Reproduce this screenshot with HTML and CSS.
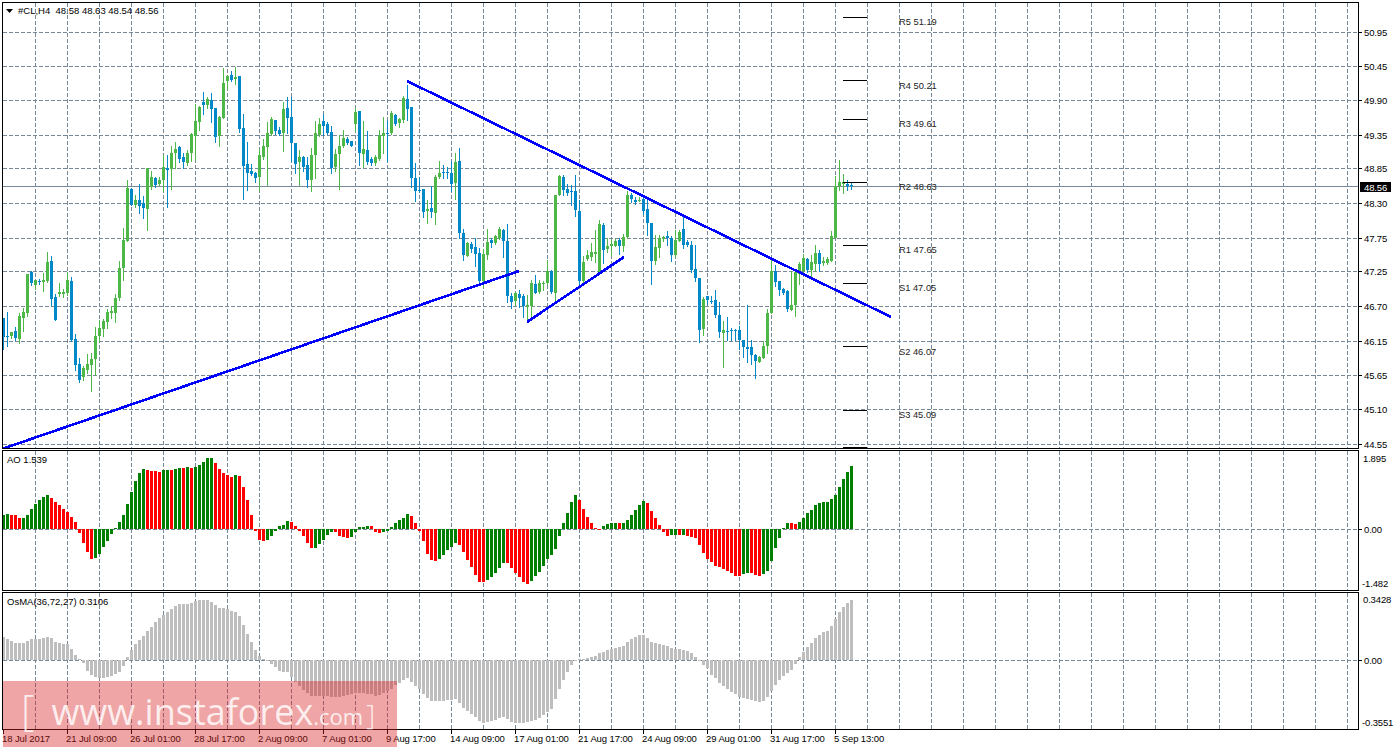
FILE: index.html
```html
<!DOCTYPE html>
<html lang="en">
<head>
<meta charset="utf-8">
<title>#CL,H4</title>
<link rel="stylesheet" href="styles.css">
</head>
<body>
<div class="terminal">
  <section class="pane pane-main">
    <div class="plot">
      <svg id="plot-main" class="canvas" width="1355" height="445" viewBox="3 3 1355 445" shape-rendering="crispEdges"></svg>
      <div class="legend legend-main">
        <svg class="legend-arrow" width="7" height="4" viewBox="0 0 7 4"><polygon points="0,0 7,0 3.5,4"></polygon></svg>
        <span class="legend-text">#CL,H4  48.58 48.63 48.54 48.56</span>
      </div>
    </div>
    <svg id="axis-main" class="axis" width="39" height="447" viewBox="1359 2 39 447"></svg>
  </section>
  <section class="pane pane-ao">
    <div class="plot">
      <svg id="plot-ao" class="canvas" width="1355" height="139" viewBox="3 451 1355 139" shape-rendering="crispEdges"></svg>
      <div class="legend legend-sub"><span class="legend-text">AO 1.539</span></div>
    </div>
    <svg id="axis-ao" class="axis" width="39" height="141" viewBox="1359 450 39 141"></svg>
  </section>
  <section class="pane pane-osma">
    <div class="plot">
      <svg id="plot-osma" class="canvas" width="1355" height="136" viewBox="3 593 1355 136" shape-rendering="crispEdges"></svg>
      <div class="legend legend-sub"><span class="legend-text">OsMA(36,72,27) 0.3106</span></div>
    </div>
    <svg id="axis-osma" class="axis" width="39" height="138" viewBox="1359 592 39 138"></svg>
  </section>
  <div class="time-axis">
    <div class="time-cell"><i class="tick"></i><span>18 Jul 2017</span></div>
    <div class="time-cell"><i class="tick"></i><span>21 Jul 09:00</span></div>
    <div class="time-cell"><i class="tick"></i><span>26 Jul 01:00</span></div>
    <div class="time-cell"><i class="tick"></i><span>28 Jul 17:00</span></div>
    <div class="time-cell"><i class="tick"></i><span>2 Aug 09:00</span></div>
    <div class="time-cell"><i class="tick"></i><span>7 Aug 01:00</span></div>
    <div class="time-cell"><i class="tick"></i><span>9 Aug 17:00</span></div>
    <div class="time-cell"><i class="tick"></i><span>14 Aug 09:00</span></div>
    <div class="time-cell"><i class="tick"></i><span>17 Aug 01:00</span></div>
    <div class="time-cell"><i class="tick"></i><span>21 Aug 17:00</span></div>
    <div class="time-cell"><i class="tick"></i><span>24 Aug 09:00</span></div>
    <div class="time-cell"><i class="tick"></i><span>29 Aug 01:00</span></div>
    <div class="time-cell"><i class="tick"></i><span>31 Aug 17:00</span></div>
    <div class="time-cell"><i class="tick"></i><span>5 Sep 13:00</span></div>
  </div>
  <div class="watermark">
    <span class="wm-open">[</span>
    <span class="wm-site">www.instaforex</span>
    <span class="wm-tld">.com</span>
    <span class="wm-close">]</span>
  </div>
</div>
<script src="script.js"></script>
</body>
</html>
```
FILE: styles.css
```css
* { box-sizing: border-box; }
html, body { margin: 0; padding: 0; background: #fff; }
body { width: 1398px; height: 750px; overflow: hidden; }

.terminal {
  position: relative;
  width: 1398px;
  height: 750px;
  padding: 2px 0 0 2px;
  display: flex;
  flex-direction: column;
  gap: 1px;
  font-family: "Liberation Sans", Arial, sans-serif;
  font-size: 9.5px;
  color: #000;
}

.pane { display: flex; flex: none; }
.pane-main { height: 447px; }
.pane-ao { height: 141px; }
.pane-osma { height: 138px; }

.plot {
  position: relative;
  flex: none;
  width: 1357px;
  border: 1px solid #000;
}
.canvas, .axis { display: block; flex: none; }
.canvas { overflow: hidden; }

.legend {
  position: absolute;
  top: 3px;
  left: 4px;
  display: flex;
  align-items: center;
  line-height: 11px;
  white-space: pre;
}
.legend-main { left: 3px; top: 2px; }
.legend-arrow { fill: #000; margin-right: 5px; }
.legend-sub { top: 3px; }

/* svg pieces */
.grid { stroke: #778899; stroke-width: 1; stroke-dasharray: 4 2; fill: none; }
.price-line { stroke: #778899; stroke-width: 1; }
.up { fill: #4db848; }
.down { fill: #0088c8; }
.ao-up { fill: #008000; }
.ao-down { fill: #ff0000; }
.osma { fill: #bebebe; }
.trend { stroke: #0000ff; stroke-width: 2.6; fill: none; }
.pivot { stroke: #000; stroke-width: 1; }
.pivot-label {
  font-family: "Liberation Sans", Arial, sans-serif;
  font-size: 9.3px;
  fill: #222;
}
.axis-tick { stroke: #000; stroke-width: 1; shape-rendering: crispEdges; }
.axis-label, .price-box-label {
  font-family: "Liberation Sans", Arial, sans-serif;
  font-size: 9.5px;
  letter-spacing: -0.15px;
}
.axis-label { fill: #000; }
.price-box { fill: #000; shape-rendering: crispEdges; }
.price-box-label { fill: #fff; }

/* time axis */
.time-axis { display: flex; flex: none; height: 15px; margin-top: -1px; padding-left: 1px; }
.time-cell {
  flex: none;
  width: 64px;
  display: flex;
  flex-direction: column;
  white-space: nowrap;
  line-height: 10px;
  letter-spacing: -0.1px;
}
.time-cell span { margin-left: -1px; }
.tick {
  display: block;
  flex: none;
  width: 1px;
  height: 4px;
  background: #000;
}

/* watermark */
.watermark {
  position: absolute;
  left: 3px;
  top: 681px;
  width: 394px;
  height: 66px;
  padding: 0 0 0 18px;
  display: flex;
  align-items: baseline;
  background: rgba(214, 30, 30, 0.4);
  color: rgba(255, 255, 255, 0.82);
  font-family: "Open Sans", sans-serif;
  line-height: 56px;
}
.wm-open { font-size: 42px; font-weight: 300; margin-right: 17px; }
.wm-site { font-size: 36px; font-weight: 400; }
.wm-tld { font-size: 22px; font-weight: 400; }
.wm-close { font-size: 28px; font-weight: 300; margin-left: 3px; }
```
FILE: script.js
```js
// Each candle: [high, bodyTop, bodyBottom, low, 0 = up / 1 = down], in chart pixels
var candles = [
[318,318,337,349,1],[312,336,337,346,1],[332,332,336,338,0],[327,331,338,340,1],[313,316,339,343,0],[308,312,318,331,0],[274,274,313,316,0],[271,272,283,285,1],
[280,280,285,289,0],[279,281,282,284,1],[273,280,282,291,0],[252,262,281,282,0],[256,261,299,305,1],[294,297,320,320,1],[283,292,294,296,0],[289,292,294,297,0],
[272,280,293,295,0],[277,281,340,341,1],[334,339,365,370,1],[358,364,380,382,1],[366,368,377,380,0],[354,364,370,373,0],[353,359,365,391,0],[327,336,359,375,0],
[320,328,336,341,0],[319,321,329,336,0],[309,312,322,328,0],[306,311,313,318,0],[294,298,313,322,0],[261,268,298,300,0],[228,240,268,280,0],[180,188,241,241,0],
[188,189,205,205,1],[195,200,205,207,0],[184,200,206,213,1],[196,203,208,218,1],[168,168,209,230,0],[171,177,187,189,0],[177,178,185,187,1],[177,180,184,185,0],
[155,167,180,191,0],[155,168,170,207,1],[146,153,169,189,0],[142,149,153,168,0],[146,147,159,162,1],[153,157,162,168,1],[150,153,163,165,0],[133,134,153,161,0],
[104,121,136,160,0],[106,107,122,130,0],[92,102,105,114,1],[97,99,105,108,0],[93,100,109,122,1],[108,108,137,142,1],[116,117,136,146,0],[68,83,118,118,0],
[75,76,81,89,0],[71,75,80,81,1],[67,77,79,84,0],[76,76,129,132,1],[114,128,166,199,1],[142,164,173,190,1],[164,171,174,175,1],[172,173,178,182,1],
[149,155,177,190,0],[139,146,157,159,0],[122,133,147,185,0],[117,119,134,135,0],[120,120,131,134,1],[127,130,134,135,1],[102,109,133,151,0],[97,108,118,133,1],
[97,117,143,161,1],[143,143,164,173,1],[150,157,162,185,0],[156,157,167,171,1],[157,165,180,187,1],[148,155,180,191,0],[121,133,155,178,0],[118,124,135,136,0],
[114,121,126,135,1],[122,124,133,134,1],[126,132,168,173,1],[149,154,167,171,0],[135,146,154,189,0],[130,138,146,147,0],[137,139,143,144,1],[141,141,146,146,1],
[108,112,124,131,0],[111,111,153,165,1],[121,149,154,167,0],[131,150,162,164,1],[157,159,163,165,1],[155,157,163,165,0],[130,135,159,160,0],[117,133,136,153,0],
[121,133,134,161,1],[111,113,133,134,0],[114,115,124,125,1],[118,119,123,127,0],[96,98,120,122,0],[85,99,109,120,1],[107,107,178,187,1],[163,178,191,201,1],
[177,190,191,192,1],[189,189,212,217,1],[200,209,211,223,0],[186,208,212,217,1],[175,177,213,224,0],[161,173,177,178,0],[165,172,173,178,1],[167,172,173,178,1],
[161,173,184,191,1],[153,162,183,199,0],[148,161,233,238,1],[229,233,255,260,1],[242,243,256,256,0],[242,244,249,252,1],[238,247,254,266,1],[248,253,281,282,1],
[249,254,281,287,0],[229,242,255,259,0],[238,240,243,247,1],[235,236,243,244,0],[227,229,238,239,0],[229,230,241,257,1],[224,241,296,302,1],[293,296,302,308,1],
[292,293,301,305,0],[290,294,298,307,1],[294,296,306,317,1],[295,305,307,320,0],[280,283,306,317,0],[275,284,293,293,1],[280,283,292,293,0],[281,283,284,290,0],
[260,271,283,284,0],[270,271,292,293,1],[195,195,293,302,0],[175,176,195,195,0],[175,177,190,195,1],[184,189,193,195,1],[185,191,192,205,1],[175,191,210,216,1],
[200,211,281,284,1],[256,262,281,284,0],[250,255,259,260,0],[243,252,257,260,0],[230,252,254,262,0],[220,224,272,273,0],[223,225,250,263,1],[238,246,249,252,0],
[239,244,246,255,0],[239,241,246,246,0],[238,240,246,254,1],[234,237,246,251,0],[191,195,237,238,0],[193,195,199,202,1],[197,200,202,204,1],[197,200,201,201,0],
[195,199,211,214,1],[200,209,223,235,1],[223,223,261,284,1],[235,247,261,264,0],[235,238,248,257,0],[236,237,239,241,0],[231,236,238,245,1],[236,238,255,261,1],
[230,240,255,257,0],[230,232,241,241,0],[215,229,245,248,1],[240,242,245,246,1],[241,245,270,272,1],[245,269,278,281,1],[278,278,330,342,1],[297,299,329,335,0],
[296,296,300,304,1],[296,301,302,303,1],[290,300,315,317,1],[302,315,332,337,1],[321,330,333,367,0],[317,331,332,340,1],[328,330,331,340,1],[329,330,331,340,1],
[326,330,340,349,1],[340,340,347,357,1],[305,347,349,362,1],[340,347,355,364,1],[354,355,361,378,1],[356,357,362,362,0],[341,346,358,358,0],[309,313,346,353,0],
[260,271,313,313,0],[265,271,282,286,1],[281,281,290,295,1],[288,289,293,294,1],[290,291,309,311,1],[271,305,310,310,0],[270,272,305,316,0],[262,264,274,284,0],
[254,258,271,274,0],[258,259,270,272,1],[255,262,270,278,0],[245,253,264,271,0],[250,253,264,271,1],[257,261,263,265,0],[257,259,263,264,0],[231,236,261,261,0],
[176,186,238,238,0],[160,182,186,190,0],[174,182,184,193,0],[180,184,186,190,1],[183,185,186,189,1]
];

// AO: height in pixels above (+) or below (-) zero; aoRed lists the red bars
var aoHeights = [14,15,14,14,11,11,14,20,25,29,32,34,31,27,24,20,17,12,7,-4,-14,-23,-30,-29,-25,-18,-12,-5,1,7,14,25,37,48,56,60,59,58,58,57,59,59,59,60,61,61,62,61,62,64,67,71,71,66,60,56,54,52,54,53,42,29,14,-2,-11,-12,-11,-7,-2,3,4,8,7,3,-2,-7,-14,-19,-19,-15,-11,-6,-3,-3,-7,-8,-9,-8,-3,2,2,3,3,-3,-4,-3,-2,2,6,9,11,15,13,6,-2,-12,-25,-31,-32,-30,-26,-21,-18,-14,-16,-23,-31,-38,-46,-53,-53,-51,-48,-44,-39,-34,-34,-39,-44,-48,-53,-55,-52,-47,-43,-37,-30,-26,-20,-7,6,16,27,34,29,20,12,6,1,-1,3,5,6,6,6,6,9,14,19,24,28,26,18,11,4,-3,-7,-6,-6,-6,-6,-7,-8,-9,-16,-24,-30,-33,-37,-38,-40,-42,-44,-47,-47,-45,-44,-44,-46,-47,-45,-42,-32,-19,-9,1,6,6,5,7,11,16,19,24,26,27,27,30,34,42,50,57,63];
var aoRed = [2,3,4,12,13,14,15,16,17,18,19,20,21,22,36,37,38,39,42,45,47,53,54,55,56,57,59,60,61,62,63,64,65,72,73,74,75,76,77,83,84,85,86,92,93,94,102,103,104,105,106,107,108,114,115,116,117,118,119,120,126,127,128,129,130,131,144,145,146,147,148,149,154,161,162,163,164,165,166,169,171,172,173,174,175,176,177,178,179,180,181,182,183,184,187,188,189,197,198];

var osmaHeights = [23,21,19,17,17,17,19,21,21,21,22,23,22,18,17,16,16,11,5,1,-3,-11,-15,-17,-18,-18,-17,-16,-14,-12,-6,3,10,16,20,24,29,33,38,42,45,48,51,54,56,56,56,57,59,60,60,60,58,55,52,52,51,49,48,44,35,26,18,10,4,1,-1,-4,-7,-11,-12,-12,-17,-22,-26,-30,-33,-36,-36,-36,-36,-36,-37,-37,-37,-36,-35,-34,-33,-33,-33,-34,-34,-36,-35,-33,-31,-29,-25,-23,-20,-18,-22,-26,-29,-34,-38,-41,-41,-41,-41,-40,-40,-39,-43,-48,-51,-54,-57,-61,-63,-62,-61,-60,-58,-57,-59,-62,-63,-63,-63,-62,-61,-60,-58,-55,-52,-49,-39,-29,-20,-12,-5,-1,1,1,2,3,4,7,8,10,11,12,13,14,18,21,23,25,25,22,18,17,16,15,14,12,11,11,10,9,7,3,-1,-5,-8,-15,-18,-23,-26,-29,-32,-34,-37,-38,-39,-40,-41,-42,-41,-37,-31,-25,-20,-16,-13,-10,-4,3,8,13,17,22,25,28,29,34,41,48,53,57,60];

var priceRows = [[32,"50.95"],[66,"50.45"],[100,"49.90"],[135,"49.35"],[168,"48.85"],[203,"48.30"],[238,"47.75"],[271,"47.25"],[306,"46.70"],[341,"46.15"],[375,"45.65"],[409,"45.10"],[444,"44.55"]];
var pivots = [[17,22,"R5 51.19"],[80,86,"R4 50.21"],[119,124,"R3 49.61"],[182,187,"R2 48.63"],[245,250,"R1 47.65"],[283,288,"S1 47.05"],[346,352,"S2 46.07"],[410,415,"S3 45.09"],[447,null,""]];
var trends = [[2,449,519,271],[407,81,891,317],[527,322,624,257]];

function barX(i) { return 3 + 4 * i; }

function verticalGrid(top, bottom) {
  var s = "";
  for (var x = 35; x <= 1347; x += 32) {
    s += '<line class="grid" x1="' + (x + 0.5) + '" y1="' + top + '" x2="' + (x + 0.5) + '" y2="' + bottom + '"></line>';
  }
  return s;
}
function horizontalGrid(y) {
  return '<line class="grid" x1="3" y1="' + (y + 0.5) + '" x2="1358" y2="' + (y + 0.5) + '"></line>';
}
function rect(cls, x, y, w, h) {
  return '<rect class="' + cls + '" x="' + x + '" y="' + y + '" width="' + w + '" height="' + h + '"></rect>';
}
function bars(heights, zero, classFor) {
  var s = "";
  heights.forEach(function (h, i) {
    var x = barX(i) - 1;
    if (h >= 0) s += rect(classFor(i), x, zero - h, 3, h);
    else s += rect(classFor(i), x, zero, 3, -h);
  });
  return s;
}
function axisLabel(y, text) {
  return '<line class="axis-tick" x1="1359" y1="' + (y + 0.5) + '" x2="1362" y2="' + (y + 0.5) + '"></line>' +
         '<text class="axis-label" x="1364" y="' + (y + 4) + '">' + text + '</text>';
}

// main chart
var main = verticalGrid(3, 448);
priceRows.forEach(function (r) { main += horizontalGrid(r[0]); });
main += '<line class="price-line" x1="3" y1="186.5" x2="1358" y2="186.5"></line>';
candles.forEach(function (c, i) {
  var x = barX(i), cls = c[4] ? "down" : "up";
  main += rect(cls, x, c[0], 1, c[3] - c[0] + 1);
  main += rect(cls, x - 1, c[1], 3, Math.max(c[2] - c[1], 1));
});
pivots.forEach(function (p) {
  main += '<line class="pivot" x1="843" y1="' + (p[0] + 0.5) + '" x2="867" y2="' + (p[0] + 0.5) + '"></line>';
  if (p[1]) main += '<text class="pivot-label" x="899" y="' + (p[1] + 3) + '">' + p[2] + '</text>';
});
trends.forEach(function (t) {
  main += '<line class="trend" x1="' + t[0] + '" y1="' + t[1] + '" x2="' + t[2] + '" y2="' + t[3] + '"></line>';
});
document.getElementById("plot-main").innerHTML = main;

var mainAxis = "";
priceRows.forEach(function (r) { mainAxis += axisLabel(r[0], r[1]); });
mainAxis += rect("price-box", 1360, 182, 31, 10);
mainAxis += '<text class="price-box-label" x="1364" y="190.5">48.56</text>';
document.getElementById("axis-main").innerHTML = mainAxis;

// AO
document.getElementById("plot-ao").innerHTML =
  verticalGrid(451, 590) + horizontalGrid(529) +
  bars(aoHeights, 529, function (i) { return aoRed.indexOf(i) >= 0 ? "ao-down" : "ao-up"; });
document.getElementById("axis-ao").innerHTML =
  '<text class="axis-label" x="1363" y="462">1.895</text>' + axisLabel(529, "0.00") +
  '<text class="axis-label" x="1362" y="587">-1.482</text>';

// OsMA
document.getElementById("plot-osma").innerHTML =
  verticalGrid(593, 729) + horizontalGrid(660) +
  bars(osmaHeights, 660, function () { return "osma"; });
document.getElementById("axis-osma").innerHTML =
  '<text class="axis-label" x="1363" y="603">0.3428</text>' + axisLabel(660, "0.00") +
  '<text class="axis-label" x="1362" y="726">-0.3551</text>';
```
